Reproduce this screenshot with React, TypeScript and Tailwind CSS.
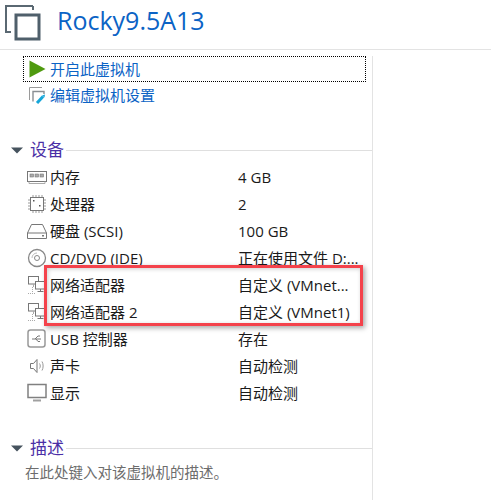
import type { ReactNode } from "react";

const FONT = "font-['Open_Sans','Noto_Sans_CJK_SC',sans-serif]";

function VmIcon() {
  return (
    <svg width="41" height="41" viewBox="0 0 41 41" fill="none" className="shrink-0">
      <path d="M33 6H6V32H11" stroke="#5a6872" strokeWidth="2" />
      <path d="M33 6V10" stroke="#5a6872" strokeWidth="2" />
      <rect x="16" y="15" width="23" height="24" stroke="#4f5f6b" strokeWidth="3" />
    </svg>
  );
}

function PlayIcon() {
  return (
    <svg width="17" height="18" viewBox="0 0 17 18">
      <path d="M0.5 0.5L16.5 9L0.5 17.5Z" fill="#4f9a0f" />
    </svg>
  );
}

function EditIcon() {
  return (
    <svg width="19" height="18" viewBox="0 0 19 18" fill="none">
      <path d="M14 1.5H1.5V14" stroke="#9a9a9a" />
      <path d="M5 15.5V5.5H16V8" stroke="#8a8f94" strokeWidth="1.4" />
      <path d="M9 17L15 10.5" stroke="#16a6d9" strokeWidth="3" />
      <path d="M14 9.5L17 8.5L16.5 11.5Z" fill="#16a6d9" />
    </svg>
  );
}

function Caret() {
  return (
    <svg width="12" height="7" viewBox="0 0 12 7">
      <path d="M0 0.5H12L6 6.5Z" fill="#46535e" />
    </svg>
  );
}

function MemoryIcon() {
  return (
    <svg width="20" height="16" viewBox="0 0 20 16" fill="none" stroke="#777">
      <rect x="0.5" y="2.5" width="19" height="10" />
      <rect x="3" y="5" width="3.5" height="3" fill="#aaa" strokeWidth="0.6" />
      <rect x="8" y="5" width="3.5" height="3" fill="#aaa" strokeWidth="0.6" />
      <rect x="13" y="5" width="3.5" height="3" fill="#aaa" strokeWidth="0.6" />
      <path d="M2 12.5V14.5H18V12.5" stroke="#aaa" />
    </svg>
  );
}

function CpuIcon() {
  return (
    <svg width="20" height="20" viewBox="0 0 20 20" fill="none">
      <rect x="3.5" y="3.5" width="13" height="13" stroke="#777" />
      <path d="M6 1V3M9 1V3M12 1V3M15 1V3M6 17V19M9 17V19M12 17V19M15 17V19M1 6H3M1 9H3M1 12H3M1 15H3M17 6H19M17 9H19M17 12H19M17 15H19" stroke="#999" />
      <rect x="6" y="6" width="1.5" height="1.5" fill="#555" />
      <rect x="12" y="11" width="1.5" height="1.5" fill="#555" />
    </svg>
  );
}

function DiskIcon() {
  return (
    <svg width="20" height="18" viewBox="0 0 20 18" fill="none" stroke="#777">
      <path d="M4.5 2.5H15.5L19.5 11V16.5H0.5V11Z" />
      <path d="M0.5 11H19.5" />
      <rect x="15" y="13" width="2" height="1.5" fill="#777" stroke="none" />
    </svg>
  );
}

function CdIcon() {
  return (
    <svg width="20" height="20" viewBox="0 0 20 20" fill="none" stroke="#888">
      <circle cx="10" cy="10" r="8.5" strokeWidth="1.3" />
      <circle cx="10" cy="10" r="2.5" />
      <path d="M5 10A5 5 0 0 1 10 5" stroke="#bbb" />
    </svg>
  );
}

function NetIcon() {
  return (
    <svg width="20" height="20" viewBox="0 0 20 20" fill="none" stroke="#777">
      <rect x="1.5" y="1.5" width="10" height="7.5" />
      <path d="M6.5 9V12" stroke="#aaa" />
      <path d="M1 18.5H9" stroke="#aaa" strokeDasharray="1 1" />
      <path d="M5.5 12V18" stroke="#aaa" strokeDasharray="1 1" />
      <rect x="8.5" y="6.5" width="10" height="7.5" fill="#fff" />
      <path d="M13.5 14V16.5M10.5 16.5H16.5" />
    </svg>
  );
}

function UsbIcon() {
  return (
    <svg width="20" height="20" viewBox="0 0 20 20" fill="none">
      <rect x="1" y="1" width="17" height="17" rx="2.5" stroke="#999" strokeWidth="1.5" />
      <path d="M5 10H14M8 10L11 7H13M9 10L11 12.5H13" stroke="#777" />
    </svg>
  );
}

function SpeakerIcon() {
  return (
    <svg width="20" height="18" viewBox="0 0 20 18" fill="none" stroke="#777">
      <path d="M3.5 6.5H6.5L10 2.5V15.5L6.5 11.5H3.5Z" />
      <path d="M12.5 6.5C13.5 8 13.5 10 12.5 11.5M15 4.5C16.5 7 16.5 11 15 13.5" stroke="#999" />
    </svg>
  );
}

function DisplayIcon() {
  return (
    <svg width="20" height="20" viewBox="0 0 20 20" fill="none">
      <rect x="1" y="1.5" width="18" height="13" stroke="#808080" strokeWidth="1.5" />
      <path d="M6 17.5H14" stroke="#a0a0a0" strokeWidth="2" />
    </svg>
  );
}

const devices: { icon: ReactNode; name: string; value: string }[] = [
  { icon: <MemoryIcon />, name: "内存", value: "4 GB" },
  { icon: <CpuIcon />, name: "处理器", value: "2" },
  { icon: <DiskIcon />, name: "硬盘 (SCSI)", value: "100 GB" },
  { icon: <CdIcon />, name: "CD/DVD (IDE)", value: "正在使用文件 D:..." },
  { icon: <NetIcon />, name: "网络适配器", value: "自定义 (VMnet..." },
  { icon: <NetIcon />, name: "网络适配器 2", value: "自定义 (VMnet1)" },
  { icon: <UsbIcon />, name: "USB 控制器", value: "存在" },
  { icon: <SpeakerIcon />, name: "声卡", value: "自动检测" },
  { icon: <DisplayIcon />, name: "显示", value: "自动检测" },
];

function SectionTitle({ title }: { title: string }) {
  return (
    <div className="flex h-6 items-center">
      <div className="ml-[11px] flex w-[19px] shrink-0">
        <Caret />
      </div>
      <span className="text-[17px] leading-6 text-[#4b2fa6]">{title}</span>
      <div className="ml-0.5 h-px flex-1 bg-[#dfdfdf]" />
    </div>
  );
}

export default function App() {
  return (
    <div className={`relative h-[500px] w-[491px] overflow-hidden bg-white ${FONT}`}>
      <div className="flex h-[50px] items-center gap-4 border-b border-[#e3e3e3] pb-2">
        <VmIcon />
        <h1 className="-mt-0.5 text-[25px] leading-8 text-[#0b63c5]">Rocky9.5A13</h1>
      </div>

      <div className="h-[450px] w-[373px] border-r border-[#e3e3e3]">
        <div className="ml-[23px] mr-[6px] mt-1.5 flex h-[26px] items-center border border-dotted border-black pl-[5px]">
          <PlayIcon />
          <span className="ml-1 text-[15px] leading-5 text-[#0b63c5]">开启此虚拟机</span>
        </div>
        <div className="ml-7 flex h-[25px] items-center">
          <EditIcon />
          <span className="ml-[3px] text-[15px] leading-5 text-[#0b63c5]">编辑虚拟机设置</span>
        </div>

        <div className="mt-[31px]">
          <SectionTitle title="设备" />
        </div>

        <div className="mt-px">
          {devices.map((d) => (
            <div key={d.name} className="flex h-[27px] items-center text-[15px] leading-5 text-[#1a1a1a]">
              <div className="ml-[27px] flex w-[23px] shrink-0 items-center">{d.icon}</div>
              <span className="w-[188px] shrink-0 whitespace-nowrap">{d.name}</span>
              <span className="whitespace-nowrap">{d.value}</span>
            </div>
          ))}
        </div>

        <div className="mt-[30px]">
          <SectionTitle title="描述" />
        </div>
        <p className="ml-[25px] mt-[3px] text-[14.5px] leading-5 text-[#6d6d6d]">在此处键入对该虚拟机的描述。</p>
      </div>

      <div className="absolute left-[44px] top-[265px] h-[61px] w-[319px] border-[3px] border-[#f4424b] shadow-[2px_2px_5px_rgba(0,0,0,0.35),inset_1px_1px_4px_rgba(0,0,0,0.2)]" />
    </div>
  );
}
